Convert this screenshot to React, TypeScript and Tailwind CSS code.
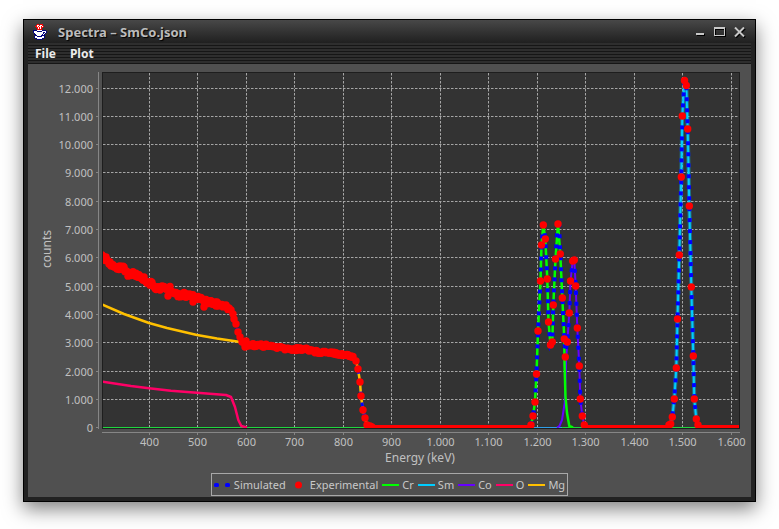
import React from "react";

type Pt = [number, number];

const FONT = "'Noto Sans', 'Open Sans', sans-serif";

const xTicks = ["400", "500", "600", "700", "800", "900", "1.000", "1.100", "1.200", "1.300", "1.400", "1.500", "1.600"];
const yTicks = ["0", "1.000", "2.000", "3.000", "4.000", "5.000", "6.000", "7.000", "8.000", "9.000", "10.000", "11.000", "12.000"];

const tickX = (i: number) => Math.floor(149 + i * 48.5) + 0.5;
const tickY = (i: number) => Math.floor(427.6 - i * 28.3) + 0.5;

const plateau: Pt[] = [
  [102, 257], [108, 260], [112, 267], [122, 267], [128, 274], [134, 274], [141, 277], [147, 281], [157, 288],
  [169, 288], [176, 294], [191, 296], [207, 301], [224, 306], [230, 309],
];
const shelf: Pt[] = [
  [245, 345], [253, 345], [270, 346], [287, 349], [307, 349], [317, 352], [330, 352], [350, 356], [354, 357],
];
const firstEdge: Pt[] = [[231, 310], [233, 314], [234, 319], [236, 324], [238, 332], [240, 337], [242, 342]];
const secondEdge: Pt[] = [
  [356, 361], [358, 369], [360, 382], [361, 396], [363, 410], [365, 418], [367, 425], [370, 426], [372, 427],
];
const outliers: Pt[] = [[106, 257], [168, 296], [193, 302], [204, 307], [245, 347], [246, 341]];

const crUp: Pt[] = [
  [531, 425], [533, 416], [535, 402], [536.5, 374], [538, 331], [540.5, 281], [541.5, 245], [543.3, 225],
  [545.3, 239], [547.3, 279], [548.5, 322], [550.5, 345], [552.3, 342], [553.3, 305], [555.5, 259], [558, 224],
  [560.3, 254], [562.3, 298], [564.3, 339],
];
const coUp: Pt[] = [
  [567.3, 342], [569.3, 313], [570.5, 281], [572.7, 261], [574.3, 260], [575.7, 286], [577.3, 328], [579.3, 366],
  [580.3, 399], [582.3, 416], [584.3, 425],
];
const smPeak: Pt[] = [
  [669, 425], [670.7, 424], [672.3, 417], [674.3, 399], [676.3, 368], [677.5, 319], [679.3, 255], [681.3, 177],
  [682.3, 116], [684.5, 80.5], [686.3, 85.5], [687.7, 129], [689.3, 206], [691.3, 287], [693.3, 356], [694.3, 399],
  [696.3, 419], [698, 425],
];

const mg: Pt[] = [
  [102, 304.5], [124, 314], [149, 323], [167, 328], [197, 335], [217, 338.5], [237, 341.5], [253, 345], [270, 346],
  [307, 349], [350, 356], ...secondEdge,
];
const o: Pt[] = [
  [102, 381.5], [131, 386], [149, 388.3], [171, 390.7], [197, 392.7], [226, 395], [231, 397], [235, 407],
  [238.3, 420], [241.3, 426], [247, 427.5],
];
const cr: Pt[] = [...crUp, [564.5, 363], [565.5, 397], [567, 413], [569.3, 426], [573, 427.5]];
const co: Pt[] = [[557, 427.5], [559.5, 426], [562, 420], [564.7, 403], [566, 363], ...coUp];
const simulatedPeaks: Pt[] = [
  ...crUp.slice(0, 15), [557.8, 220], [559, 220], ...crUp.slice(16), [565.4, 352], ...coUp,
];

const pts = (a: Pt[]) => a.map((p) => p.join(",")).join(" ");

const noise = (n: number) => {
  const s = Math.sin(n * 12.9898) * 43758.5453;
  return (s - Math.floor(s)) * 2 - 1;
};

function scatter(curve: Pt[], amplitude: number): Pt[] {
  const out: Pt[] = [];
  for (let i = 0; i < curve.length - 1; i++) {
    const [x0, y0] = curve[i];
    const [x1, y1] = curve[i + 1];
    for (let x = x0; x < x1; x += 1) {
      out.push([x, y0 + ((y1 - y0) * (x - x0)) / (x1 - x0) + noise(x) * amplitude]);
    }
  }
  return out;
}

const experimental: Pt[] = [
  ...scatter(plateau, 2.5), ...firstEdge, ...scatter(shelf, 1.5), ...secondEdge, ...outliers,
  ...crUp, [565.3, 357], ...coUp, ...smPeak,
];

function Curve({ points, color, width = 2, halo = false }: { points: Pt[]; color: string; width?: number; halo?: boolean }) {
  return (
    <g fill="none" stroke={color} strokeLinejoin="round">
      {halo && <polyline points={pts(points)} strokeWidth="4" opacity="0.4" />}
      <polyline points={pts(points)} strokeWidth={width} />
    </g>
  );
}

function Chart() {
  return (
    <svg viewBox="28 64 723 409" className="block w-full" role="img" aria-label="Energy spectrum">
      <defs>
        <clipPath id="plot-area">
          <rect x="103" y="73" width="636" height="355" />
        </clipPath>
      </defs>
      <rect x="102" y="72" width="638" height="357" fill="#1e1e1e" />
      <rect x="103" y="73" width="636" height="355" fill="#333333" />
      <g stroke="#a6a6a6" strokeDasharray="2.5 1.5">
        {xTicks.map((t, i) => <line key={t} x1={tickX(i)} x2={tickX(i)} y1="73" y2="428" />)}
        {yTicks.slice(1).map((t, i) => <line key={t} x1="103" x2="739" y1={tickY(i + 1)} y2={tickY(i + 1)} />)}
      </g>
      <g stroke="#868686">
        <line x1="98.5" x2="98.5" y1="72" y2="429" />
        <line x1="102" x2="740" y1="432.5" y2="432.5" />
        {xTicks.map((t, i) => <line key={t} x1={tickX(i)} x2={tickX(i)} y1="433" y2="435" />)}
        {yTicks.map((t, i) => <line key={t} x1="96" x2="98" y1={tickY(i)} y2={tickY(i)} />)}
      </g>
      <g fill="#c0c0c0" fontFamily={FONT} fontSize="11">
        {xTicks.map((t, i) => <text key={t} x={tickX(i)} y="446" textAnchor="middle">{t}</text>)}
        {yTicks.map((t, i) => <text key={t} x="93" y={tickY(i) + 4} textAnchor="end">{t}</text>)}
      </g>
      <g fill="#c0c0c0" fontFamily={FONT} fontSize="12" textAnchor="middle">
        <text x="420" y="462">Energy (keV)</text>
        <text x="51" y="249" transform="rotate(-90 51 249)">counts</text>
      </g>
      <g clipPath="url(#plot-area)">
        <line x1="103" x2="739" y1="427.5" y2="427.5" stroke="#1fd63f" />
        <line x1="534" x2="562" y1="427.5" y2="427.5" stroke="#2f9fe8" />
        <Curve points={mg} color="#ffc000" width={2.5} />
        <Curve points={o} color="#ff0066" width={2.5} />
        <Curve points={co} color="#6600ff" />
        <Curve points={cr} color="#00ff00" width={2.5} />
        <Curve points={smPeak} color="#00ccff" halo />
        <g fill="none" stroke="#0000ff" strokeWidth="4" strokeDasharray="4 7">
          <polyline points={pts(simulatedPeaks)} />
          <polyline points={pts(smPeak)} />
          <polyline points={pts([...plateau, ...firstEdge, ...shelf, ...secondEdge])} strokeWidth="3" />
        </g>
        <g fill="#ff0000">
          <rect x="370" y="425" width="161" height="3" />
          <rect x="585" y="425" width="84" height="3" />
          <rect x="698" y="425" width="41" height="3" />
          {experimental.map(([x, y], i) => <circle key={i} cx={x} cy={y} r="3.7" />)}
        </g>
      </g>
    </svg>
  );
}

const series = [
  { name: "Simulated", color: "#0000ff", kind: "dots" },
  { name: "Experimental", color: "#ff0000", kind: "dot" },
  { name: "Cr", color: "#00ff00", kind: "line" },
  { name: "Sm", color: "#00ccff", kind: "line" },
  { name: "Co", color: "#6600ff", kind: "line" },
  { name: "O", color: "#ff0066", kind: "line" },
  { name: "Mg", color: "#ffc000", kind: "line" },
];

function Legend() {
  return (
    <ul className="mx-auto flex w-fit items-center gap-1 border border-[#a8a8a8] px-[2px] text-[11px] leading-[21px] text-[#c8c8c8]">
      {series.map((s) => (
        <li key={s.name} className="flex items-center gap-[3px]">
          <svg width="17" height="8" viewBox="0 0 17 8" aria-hidden="true" fill={s.color}>
            {s.kind === "line" && <rect y="3" width="17" height="2" />}
            {s.kind === "dot" && <circle cx="8.5" cy="4" r="3.5" />}
            {s.kind === "dots" && <><rect x="0" y="2" width="5" height="4" rx="1.5" /><rect x="11" y="2" width="5" height="4" rx="1.5" /></>}
          </svg>
          <span>{s.name}</span>
        </li>
      ))}
    </ul>
  );
}

const cup = [
  "....rr.rrr....",
  "...rwwrwwr....",
  "..rrwrwwrwr...",
  "...rrwrwrr....",
  "....rwrwr.....",
  "....rrrrr.....",
  "nnnnwwwwwnnnn.",
  "nwwwnnnnnwwwwn",
  "nwwwwwwwwwnnwn",
  ".nwwwwwwwwnwn.",
  ".nnwwwwwwnwn..",
  "..nnwwwwnnnn..",
  ".nwwnnnnnwwn..",
  ".nwwwwwwwwwn..",
  "..nnwwwwwnn...",
  "....nnnnn.....",
];
const cupColors: Record<string, string> = { r: "#ff0000", w: "#ffffff", n: "#000080" };

function JavaIcon() {
  return (
    <svg width="14" height="16" viewBox="0 0 14 16" aria-hidden="true" shapeRendering="crispEdges">
      {cup.flatMap((row, y) =>
        [...row].map((c, x) => c !== "." && <rect key={`${x}-${y}`} x={x} y={y} width="1" height="1" fill={cupColors[c]} />)
      )}
    </svg>
  );
}

export default function App() {
  return (
    <main className="flex min-h-screen flex-col bg-white px-[23px] pt-[19px] pb-[27px] font-['Noto_Sans','Open_Sans',sans-serif]">
      <section className="border border-black bg-[#222222] px-1 pb-1 shadow-[0_7px_18px_rgba(0,0,0,0.5)]">
        <header className="-mx-1 flex h-[23px] items-center bg-linear-to-b from-[#484848] to-[#202020] pr-[10px] pl-[9px]">
          <JavaIcon />
          <h1 className="ml-[11px] flex-1 text-[13px] leading-[16px] font-bold text-[#bcbcbc] [text-shadow:1px_1px_1px_#000]">
            Spectra – SmCo.json
          </h1>
          <div className="flex items-center gap-[9px] text-[#c8c8c8] drop-shadow-[1px_1px_0_#000]">
            <button type="button" aria-label="Minimize">
              <svg className="block" width="10" height="10" viewBox="0 0 10 10"><rect y="6" x="1" width="8" height="2" fill="currentColor" /></svg>
            </button>
            <button type="button" aria-label="Maximize">
              <svg className="block" width="11" height="10" viewBox="0 0 11 10"><path d="M0 0h11v9H0zM1 2v6h9V2z" fillRule="evenodd" fill="currentColor" /></svg>
            </button>
            <button type="button" aria-label="Close">
              <svg className="block" width="11" height="10" viewBox="0 0 11 10"><path d="M1 .5l9 9M10 .5l-9 9" stroke="currentColor" strokeWidth="2" /></svg>
            </button>
          </div>
        </header>
        <nav className="flex h-[21px] items-center gap-[14px] bg-[repeating-linear-gradient(to_bottom,#2e2e2e_0px,#2e2e2e_2px,#161616_2px,#161616_3px)] pl-[7px] text-[12px] leading-[20px] font-bold text-[#ececec]">
          <button type="button">File</button>
          <button type="button">Plot</button>
        </nav>
        <div className="bg-[#505050] pb-px">
          <Chart />
          <Legend />
        </div>
      </section>
    </main>
  );
}
